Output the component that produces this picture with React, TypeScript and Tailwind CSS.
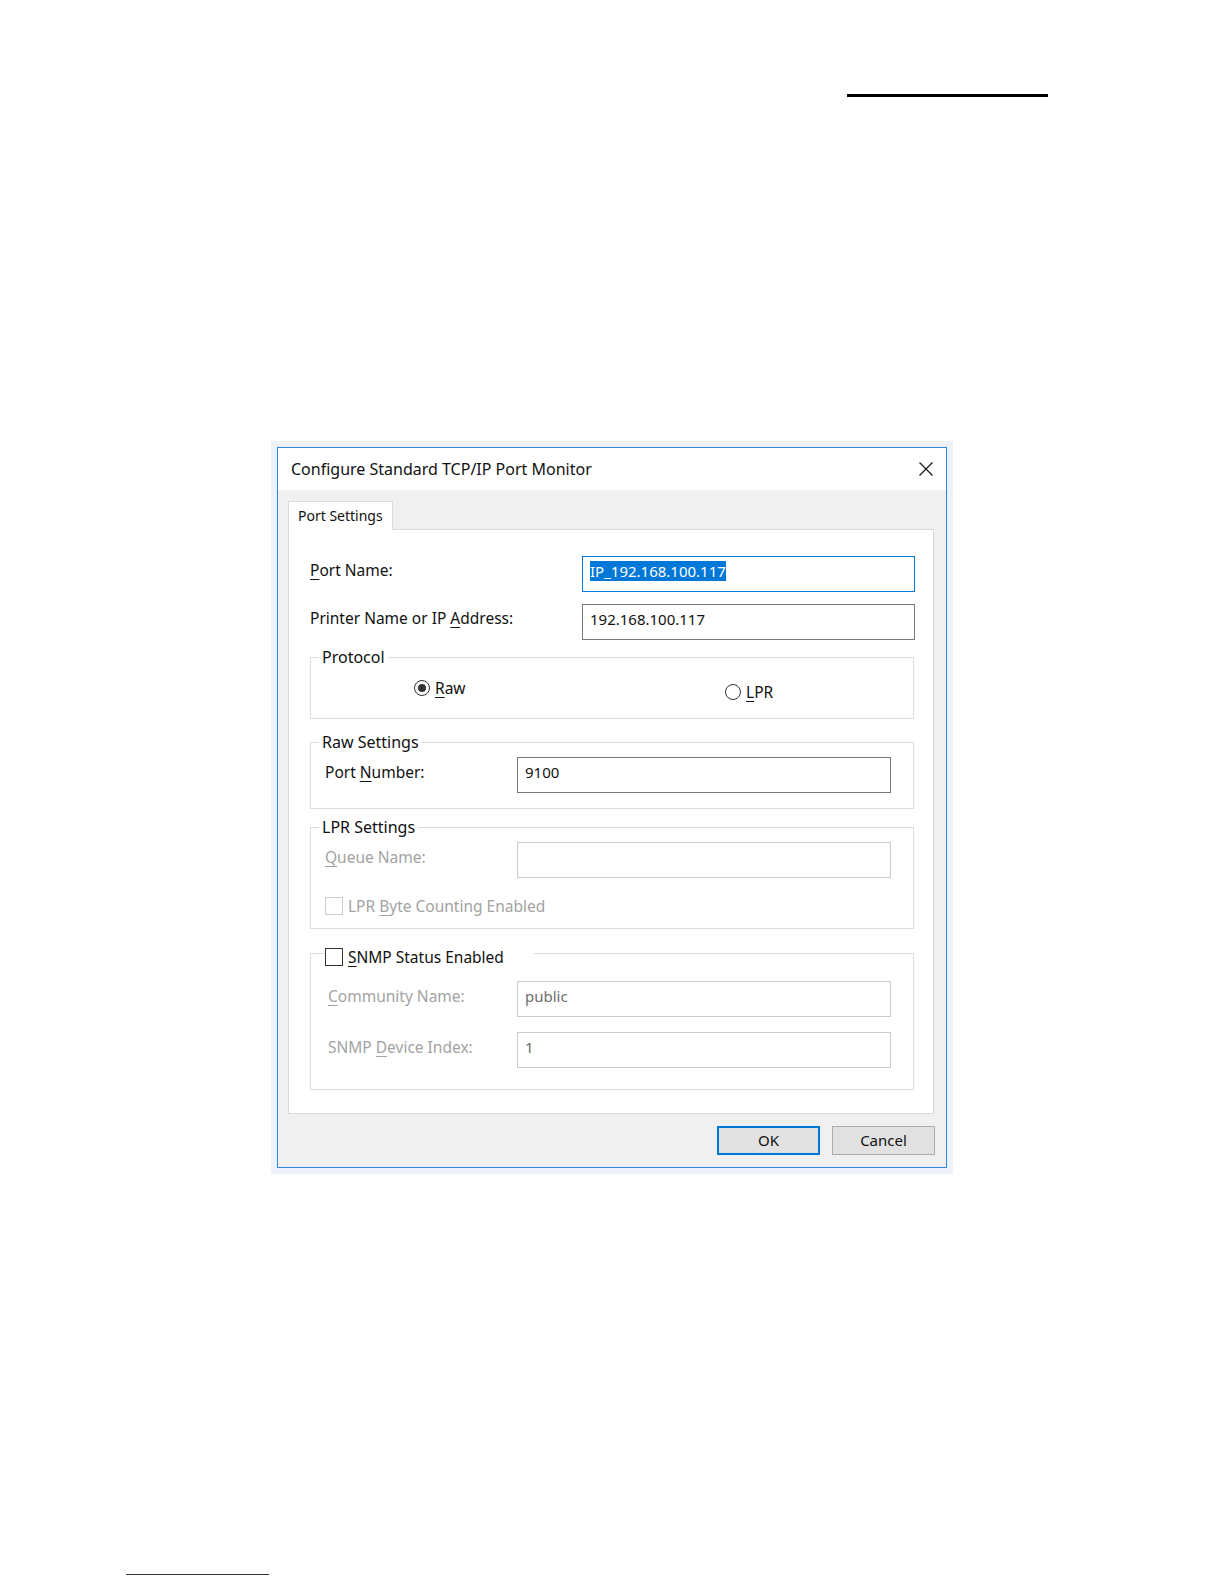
import type { ReactNode } from 'react';

// access-key underline
function K({ children }: { children: ReactNode }) {
  return <u className="underline decoration-1 underline-offset-[3px]">{children}</u>;
}

type BoxTone = 'focus' | 'normal' | 'disabled';

function TextBox({
  width,
  tone = 'normal',
  padLeft = 'pl-[7px]',
  children,
}: {
  width: string;
  tone?: BoxTone;
  padLeft?: string;
  children?: ReactNode;
}) {
  const border =
    tone === 'focus'
      ? 'border-[#0078d7]'
      : tone === 'disabled'
        ? 'border-[#cccccc] text-[#6d6d6d]'
        : 'border-[#7a7a7a] text-[#111]';
  return (
    <div className={`h-[36px] shrink-0 border bg-white pt-[3px] text-[15px] leading-[22px] ${width} ${border} ${padLeft}`}>
      {children}
    </div>
  );
}

function GroupTitle({ children }: { children: ReactNode }) {
  return (
    <div className="-mt-[12px] ml-[8px] w-fit bg-white px-[3px] text-[16px] leading-[22px] text-[#111]">
      {children}
    </div>
  );
}

function Radio({ checked }: { checked?: boolean }) {
  return (
    <span className="flex h-[16px] w-[16px] shrink-0 items-center justify-center rounded-full border border-[#333] bg-white">
      {checked && <span className="h-[8px] w-[8px] rounded-full bg-[#333]" />}
    </span>
  );
}

function CheckBox({ disabled }: { disabled?: boolean }) {
  return (
    <span
      className={`h-[18px] w-[18px] shrink-0 border bg-white ${disabled ? 'border-[#cccccc]' : 'border-[#333]'}`}
    />
  );
}

export default function App() {
  return (
    <div className="min-h-[1584px] w-[1224px] bg-white pt-[94px] font-['Noto_Sans',sans-serif] text-[#111]">
      {/* header rule */}
      <div className="ml-[847px] h-[3px] w-[201px] bg-black" />

      {/* Dialog */}
      <div className="ml-[271px] mt-[344px] w-[682px] bg-[#eef1f8] p-[6px]">
        <div className="h-[721px] border border-[#2b88d8] bg-[#f0f0f0]">
          {/* Title bar */}
          <div className="flex h-[42px] items-center justify-between bg-white pl-[13px] pr-[13px]">
            <span className="text-[16px] leading-[22px]">Configure Standard TCP/IP Port Monitor</span>
            <svg width="14" height="14" viewBox="0 0 14 14" aria-label="Close">
              <path d="M0.5 0.5 L13.5 13.5 M13.5 0.5 L0.5 13.5" stroke="#1b1b1b" strokeWidth="1.3" fill="none" />
            </svg>
          </div>

          <div className="px-[10px] pt-[11px]">
            {/* Tab */}
            <div className="relative -mb-px h-[29px] w-[105px] border border-b-0 border-[#d9d9d9] bg-white pl-[9px] text-[14px] leading-[28px]">
              Port Settings
            </div>

            {/* Tab panel */}
            <div className="h-[585px] w-[646px] border border-[#d9d9d9] bg-white pl-[21px] text-[15.5px]">
              <div className="mt-[26px] flex">
                <div className="w-[272px] pt-[3px] leading-[22px]">
                  <K>P</K>ort Name:
                </div>
                <TextBox width="w-[333px]" tone="focus" padLeft="pl-[7px]">
                  <span className="inline-block h-[20px] bg-[#0078d7] leading-[20px] text-white">IP_192.168.100.117</span>
                </TextBox>
              </div>

              <div className="mt-[12px] flex">
                <div className="w-[272px] pt-[3px] leading-[22px]">
                  Printer Name or IP <K>A</K>ddress:
                </div>
                <TextBox width="w-[333px]">192.168.100.117</TextBox>
              </div>

              {/* Protocol */}
              <div className="mt-[17px] h-[62px] w-[604px] border border-[#dcdcdc]">
                <GroupTitle>Protocol</GroupTitle>
                <div className="mt-[9px] flex items-start pl-[103px]">
                  <div className="flex w-[311px] items-center gap-[5px] leading-[22px]">
                    <Radio checked />
                    <span>
                      <K>R</K>aw
                    </span>
                  </div>
                  <div className="mt-[4px] flex items-center gap-[5px] leading-[22px]">
                    <Radio />
                    <span>
                      <K>L</K>PR
                    </span>
                  </div>
                </div>
              </div>

              {/* Raw Settings */}
              <div className="mt-[23px] h-[67px] w-[604px] border border-[#dcdcdc]">
                <GroupTitle>Raw Settings</GroupTitle>
                <div className="mt-[4px] flex pl-[14px]">
                  <div className="w-[192px] pt-[4px] leading-[22px]">
                    Port <K>N</K>umber:
                  </div>
                  <TextBox width="w-[374px]">9100</TextBox>
                </div>
              </div>

              {/* LPR Settings */}
              <div className="mt-[18px] h-[102px] w-[604px] border border-[#dcdcdc]">
                <GroupTitle>LPR Settings</GroupTitle>
                <div className="mt-[4px] flex pl-[14px]">
                  <div className="w-[192px] pt-[4px] leading-[22px] text-[#a3a3a3]">
                    <K>Q</K>ueue Name:
                  </div>
                  <TextBox width="w-[374px]" tone="disabled" />
                </div>
                <div className="mt-[17px] flex h-[22px] items-center gap-[5px] pl-[14px] text-[#a3a3a3]">
                  <CheckBox disabled />
                  <span className="leading-[22px]">
                    LPR <K>B</K>yte Counting Enabled
                  </span>
                </div>
              </div>

              {/* SNMP */}
              <div className="mt-[24px] h-[137px] w-[604px] border border-[#dcdcdc]">
                <div className="-mt-[8px] ml-[14px] flex h-[22px] w-fit items-center gap-[5px] bg-white pr-[30px]">
                  <CheckBox />
                  <span className="leading-[22px]">
                    <K>S</K>NMP Status Enabled
                  </span>
                </div>
                <div className="mt-[13px] flex pl-[17px]">
                  <div className="w-[189px] pt-[4px] leading-[22px] text-[#a3a3a3]">
                    <K>C</K>ommunity Name:
                  </div>
                  <TextBox width="w-[374px]" tone="disabled">public</TextBox>
                </div>
                <div className="mt-[15px] flex pl-[17px]">
                  <div className="w-[189px] pt-[4px] leading-[22px] text-[#a3a3a3]">
                    SNMP <K>D</K>evice Index:
                  </div>
                  <TextBox width="w-[374px]" tone="disabled">1</TextBox>
                </div>
              </div>
            </div>

            {/* Buttons */}
            <div className="mt-[12px] flex justify-end gap-[12px] pr-[1px]">
              <button className="h-[29px] w-[103px] border-2 border-[#0078d7] bg-[#e1e1e1] text-[15px] leading-[25px]">
                OK
              </button>
              <button className="h-[29px] w-[103px] border border-[#adadad] bg-[#e1e1e1] text-[15px] leading-[27px]">
                Cancel
              </button>
            </div>
          </div>
        </div>
      </div>

      {/* footer rule */}
      <div className="ml-[126px] mt-[400px] h-px w-[143px] bg-[#333]" />
    </div>
  );
}
